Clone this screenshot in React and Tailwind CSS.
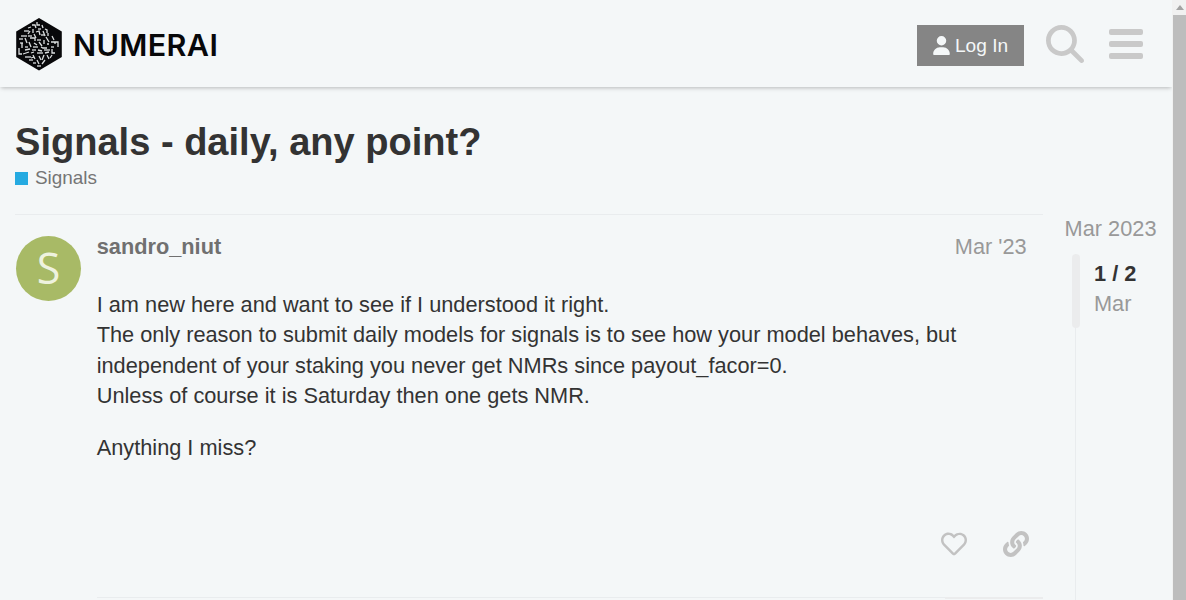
import { FaLink, FaRegHeart } from "react-icons/fa";

const lines = [
  "M36 22v3h3","M31 25h3l1 3","M41 25l1 3","M27 28l3-1","M44 29l2 1v3","M37 29h3","M32 29v4","M23 31h5","M29 31l-2 3","M35 32l3-1 1 4","M42 31l2 5","M47 33v3",
  "M20 36h6","M27 36h4","M33 34l2 4","M40 35h3","M45 37l3 5","M51 36l2 4","M18 39h4","M24 38l2 5","M29 38h5v3","M36 40h4","M43 40v4","M50 42h7v5",
  "M19 43h3","M21 43v5","M28 42l2 5","M33 43l3 2","M38 42l3 4","M46 44h2","M54 42v2","M18 48v6h3","M24 47h3","M32 47h5","M40 47l2 1h4","M50 47h3",
  "M24 50l5-1","M31 50h4","M37 50l4 1","M43 50h6","M51 49v4h3","M22 54l6-2","M30 53l3-1","M36 53h6","M44 53l4-1","M24 57h6","M32 55l2 4","M38 56l2 4","M43 55l-2 5","M46 55l2 4","M51 55l-2 3",
  "M28 60h4","M36 60l2 4","M44 60l-3 4","M32 63h3","M36 66h4","M30 58l3-1"
];

function Logo() {
  return (
    <svg width="48" height="54" viewBox="14 17 48 54" className="shrink-0">
      <path d="M38 18 60.800 31.500 V57 L38 70.500 15.200 57 V31.500 Z" fill="#08080a" />
      <g fill="none" stroke="#f4f7f8" strokeOpacity="0.9" strokeWidth="1.300">
        {lines.map((d, i) => <path key={i} d={d} />)}
      </g>
    </svg>
  );
}

function Scrollbar() {
  return (
    <div className="w-[14px] h-[600px] shrink-0 bg-[#f1f1f1] flex flex-col items-end">
      <div className="h-[15px] w-[13px] flex items-center justify-center">
        <svg width="8" height="5" viewBox="0 0 8 5"><path d="M4 0 8 5H0z" fill="#a3a3a3" /></svg>
      </div>
      <div className="flex-1 w-[13px] bg-[#bdbdbd]" />
    </div>
  );
}

export default function App() {
  return (
    <div className="flex w-[1186px] h-[600px] overflow-hidden bg-[#f4f7f8] font-['Liberation_Sans',Arial,sans-serif]">
      <div className="w-[1172px] shrink-0 flex flex-col">
        <header className="h-[87px] shrink-0 flex items-center pl-[15px] pr-[29px] shadow-[0_2px_4px_-1px_rgba(0,0,0,0.25)]">
          <Logo />
          <span className="ml-[10px] mt-[3px] text-[30.500px] leading-none font-['Inter',sans-serif] font-semibold tracking-[0.35px] text-[#08080a]">NUMERAI</span>
          <div className="ml-auto flex items-center">
            <button className="h-[41px] w-[107px] mt-[3px] bg-[#858585] text-[#f4f7f8] text-[19.140px] flex items-center justify-center gap-[5px]">
              <svg width="17" height="19" viewBox="0 0 448 512" fill="#f4f7f8"><path d="M224 256A128 128 0 1 0 224 0a128 128 0 1 0 0 256zm-45.700 48C79.800 304 0 383.800 0 482.300 0 498.700 13.300 512 29.700 512h388.600c16.400 0 29.700-13.300 29.700-29.700C448 383.800 368.200 304 269.700 304z" /></svg>
              <span className="mt-[2px]">Log In</span>
            </button>
            <svg className="ml-[22px]" width="38" height="38" viewBox="0 0 512 512" fill="#c9c9c9"><path d="M416 208c0 45.900-14.900 88.300-40 122.700L502.600 457.400c12.500 12.500 12.500 32.800 0 45.300s-32.800 12.500-45.300 0L330.700 376c-34.400 25.200-76.800 40-122.700 40C93.100 416 0 322.900 0 208S93.100 0 208 0S416 93.100 416 208zM208 352a144 144 0 1 0 0-288 144 144 0 1 0 0 288z" /></svg>
            <div className="ml-[25px] w-[34px] flex flex-col gap-[6px]">
              <div className="h-[6px] rounded-[2px] bg-[#c9c9c9]" />
              <div className="h-[6px] rounded-[2px] bg-[#c9c9c9]" />
              <div className="h-[6px] rounded-[2px] bg-[#c9c9c9]" />
            </div>
          </div>
        </header>

        <main className="pl-[15px] flex-1 min-h-0 flex flex-col">
          <h1 className="mt-[33px] text-[38.060px] leading-[44px] font-bold text-[#333333] whitespace-nowrap">Signals - daily, any point?</h1>
          <div className="mt-[1px] flex items-center gap-[7px] text-[18.920px] leading-[26px] text-[#757575]">
            <span className="w-[13px] h-[13px] bg-[#25aae1]" />
            Signals
          </div>

          <div className="mt-[23px] flex flex-1 min-h-0">
            <article className="w-[1028px] shrink-0 border-t border-[#e9ecee] flex pt-[21px] overflow-hidden">
              <div className="w-[65px] h-[65px] ml-[1px] shrink-0 rounded-full bg-[#a8ba66] flex items-center justify-center text-[#eef2df] text-[43px] font-medium font-['Open_Sans',sans-serif]">S</div>
              <div className="ml-[15.700px] w-[946px] shrink-0 flex flex-col">
                <div className="flex justify-between pr-[16px] leading-[22px]">
                  <span className="text-[21.750px] font-bold text-[#707070]">sandro_niut</span>
                  <span className="text-[21.750px] text-[#999999]">Mar '23</span>
                </div>
                <div className="mt-[32px] text-[21.750px] leading-[30.400px] text-[#333333] whitespace-nowrap">
                  <p>I am new here and want to see if I understood it right.<br />
                  The only reason to submit daily models for signals is to see how your model behaves, but<br />
                  independent of your staking you never get NMRs since payout_facor=0.<br />
                  Unless of course it is Saturday then one gets NMR.</p>
                  <p className="mt-[21px]">Anything I miss?</p>
                </div>
                <div className="mt-[65px] flex items-center h-[32px] text-[#c2c2c2]">
                  <FaRegHeart className="ml-[844px]" size={26} />
                  <FaLink className="ml-[36px]" size={26} />
                </div>
                <div className="mt-[37px] h-[2px] shrink-0 flex">
                  <div className="w-[848px] h-[1px] bg-[#e9ecee]" />
                  <div className="flex-1 h-[2px] bg-[#ebeced]" />
                </div>
              </div>
            </article>

            <aside className="flex-1 pl-[21.600px] min-w-0">
              <div className="text-[21.750px] leading-[30px] text-[#999999] whitespace-nowrap">Mar 2023</div>
              <div className="relative mt-[10px] -ml-[0.600px] translate-x-[11px] h-[400px] border-l border-[#e9ecee] pl-[18px]">
                <div className="absolute -left-[4px] top-0 w-[8px] h-[74px] rounded-full bg-[#ebeced]" />
                <div className="pt-[5px] text-[21.750px] leading-[30px] font-bold text-[#333333]">1 / 2</div>
                <div className="text-[21.750px] leading-[30px] text-[#999999]">Mar</div>
              </div>
            </aside>
          </div>
        </main>
      </div>
      <Scrollbar />
    </div>
  );
}
